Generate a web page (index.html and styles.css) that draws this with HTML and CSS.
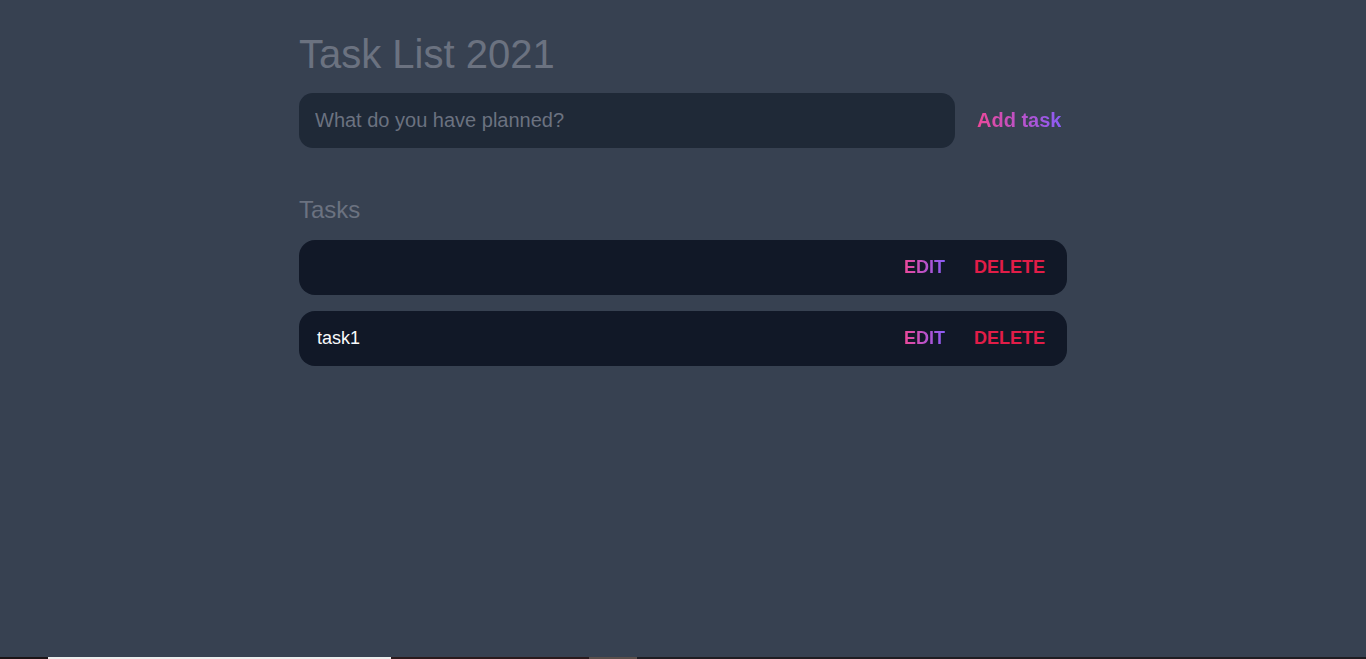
FILE: index.html
```html
<!DOCTYPE html>
<html lang="en">
<head>
<meta charset="utf-8">
<title>Task List 2021</title>
<link rel="stylesheet" href="styles.css">
</head>
<body>
<main class="page">
  <div class="container">
    <h1 class="title">Task List 2021</h1>
    <form class="new-task">
      <input class="new-task-input" type="text" placeholder="What do you have planned?">
      <button type="button" class="add-btn gradient-text">Add task</button>
    </form>
    <section class="tasks">
      <h2 class="tasks-title">Tasks</h2>
      <div class="task-list">
        <div class="task">
          <span class="task-text"></span>
          <div class="actions">
            <button type="button" class="edit gradient-text">EDIT</button>
            <button type="button" class="delete">DELETE</button>
          </div>
        </div>
        <div class="task">
          <span class="task-text">task1</span>
          <div class="actions">
            <button type="button" class="edit gradient-text">EDIT</button>
            <button type="button" class="delete">DELETE</button>
          </div>
        </div>
      </div>
    </section>
  </div>
</main>
<div class="taskbar">
  <span class="tb-a"></span><span class="tb-b"></span><span class="tb-c"></span><span class="tb-d"></span><span class="tb-e"></span>
</div>
</body>
</html>
```
FILE: styles.css
```css
* { box-sizing: border-box; }
html, body { margin: 0; padding: 0; }
body {
  background: #374151;
  font-family: "Liberation Sans", Arial, sans-serif;
  min-height: 100vh;
  display: flex;
  flex-direction: column;
}
.page { flex: 1; display: flex; justify-content: center; }
.container {
  width: 768px;
  padding-top: 30px;
}
.title {
  margin: 0;
  font-size: 40px;
  font-weight: 400;
  color: #6b7280;
  line-height: 48px;
}
.new-task {
  display: flex;
  align-items: center;
  margin-top: 15px;
}
.new-task-input {
  width: 656px;
  height: 55px;
  border: none;
  outline: none;
  border-radius: 14px;
  background: #1f2937;
  padding: 0 16px;
  font-family: inherit;
  font-size: 20px;
  color: #e5e7eb;
}
.new-task-input::placeholder { color: #6b7280; }
.gradient-text {
  background: linear-gradient(to right, #ec4899, #8b5cf6);
  -webkit-background-clip: text;
  background-clip: text;
  color: transparent;
}
.add-btn {
  border: none;
  padding: 0;
  margin-left: 22px;
  font-family: inherit;
  font-size: 20px;
  font-weight: 700;
  line-height: 24px;
  margin-top: -1px;
  cursor: pointer;
}
.tasks { margin-top: 48px; }
.tasks-title {
  margin: 0;
  font-size: 24px;
  font-weight: 400;
  color: #6b7280;
  line-height: 28px;
}
.task-list {
  display: flex;
  flex-direction: column;
  gap: 16px;
  margin-top: 16px;
}
.task {
  height: 55px;
  border-radius: 16px;
  background: #111827;
  display: flex;
  align-items: center;
  justify-content: space-between;
  padding: 0 22px 0 18px;
}
.task-text { color: #f9fafb; font-size: 18px; }
.actions { display: flex; gap: 29px; align-items: center; margin-top: -2px; }
.edit, .delete {
  border: none;
  padding: 0;
  font-family: inherit;
  font-size: 18px;
  font-weight: 700;
  line-height: 22px;
  cursor: pointer;
}
.delete { background: none; color: #e11d48; }
.taskbar {
  height: 2px;
  display: flex;
  background: #1f1a1d;
}
.taskbar span { display: block; height: 2px; }
.tb-a { width: 48px; background: #1b1416; }
.tb-b { width: 343px; background: #ececec; }
.tb-c { width: 198px; background: #2a1a1c; }
.tb-d { width: 48px; background: #5a4e4a; }
.tb-e { flex: 1; background: #1f1d22; }
```
